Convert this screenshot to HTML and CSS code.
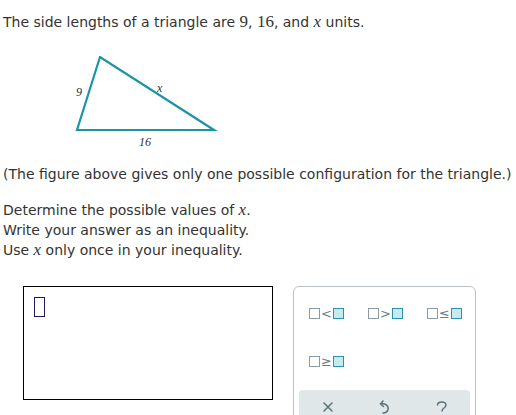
FILE: index.html
```html
<!DOCTYPE html>
<html lang="en">
    <head>
        <title>Triangle Inequality</title>
        <meta charset="UTF-8">
        <link rel="stylesheet" href="styles.css">
    </head>
    <body>
        <main>
            <p class="line">The side lengths of a triangle are <span class="num">9</span>, <span class="num">16</span>, and <i class="var">x</i> units.</p>

            <div class="figure">
                <svg width="160" height="92" viewBox="0 0 160 92">
                    <polygon points="33,1 10,74 147,74" fill="none" stroke="#1b95a6" stroke-width="2.2" stroke-linejoin="miter" />
                    <text x="9" y="40" class="lbl">9</text>
                    <text x="90" y="36" class="lbl">x</text>
                    <text x="72" y="90" class="lbl">16</text>
                </svg>
            </div>

            <p class="note">(The figure above gives only one possible configuration for the triangle.)</p>

            <div class="task">
                <div>Determine the possible values of <i class="var">x</i>.</div>
                <div>Write your answer as an inequality.</div>
                <div>Use <i class="var">x</i> only once in your inequality.</div>
            </div>

            <div class="work">
                <div class="answer">
                    <span class="cursor"></span>
                </div>

                <div class="palette">
                    <div class="keys">
                        <button><span class="box"></span><span class="op">&lt;</span><span class="box on"></span></button>
                        <button><span class="box"></span><span class="op">&gt;</span><span class="box on"></span></button>
                        <button><span class="box"></span><span class="op">&le;</span><span class="box on"></span></button>
                        <button><span class="box"></span><span class="op">&ge;</span><span class="box on"></span></button>
                    </div>
                    <div class="tools">
                        <svg class="tool" width="14" height="16" viewBox="0 0 14 16">
                            <path d="M3 3 L11 11 M11 3 L3 11" />
                        </svg>
                        <svg class="tool" width="14" height="16" viewBox="0 0 14 16">
                            <path d="M5 1 L2.5 4 L5.5 6.5 M2.5 4 C7 3 11 5.5 10 9.5 C9.3 12 6.5 13 5 13" />
                        </svg>
                        <svg class="tool" width="14" height="16" viewBox="0 0 14 16">
                            <path d="M2.5 5 C2.5 1.5 11 0.5 11 5 C11 8 7 8 7 11" />
                        </svg>
                    </div>
                </div>
            </div>
        </main>
    </body>
</html>
```

FILE: styles.css
```css
body {
    margin: 0;
    font-family: 'DejaVu Sans', Verdana, sans-serif;
    font-size: 14px;
    color: #333;
    background: #fff;
    overflow: hidden;
}

main {
    padding: 12px 0 0 3px;
}

p {
    margin: 0;
}

.num,
.var {
    font-family: 'Liberation Serif', serif;
    font-size: 17px;
}

.line {
    line-height: 20px;
}

.figure {
    margin: 24px 0 0 64px;
    height: 92px;
}

.figure svg {
    display: block;
}

.lbl {
    font-family: 'Liberation Serif', serif;
    font-style: italic;
    font-size: 12px;
    fill: #333;
}

.note {
    line-height: 20px;
    margin-top: 16px;
}

.task {
    margin-top: 16px;
    line-height: 20px;
}

.work {
    display: flex;
    gap: 20px;
    margin: 26px 0 0 20px;
}

.answer {
    border: 1px solid #000;
    padding: 10px 0 0 10px;
    box-sizing: border-box;
    width: 250px;
    height: 114px;
}

.cursor {
    display: block;
    width: 9px;
    height: 18px;
    border: 1px solid #1c1a5e;
}

.palette {
    width: 183px;
    height: 150px;
    border: 1px solid #b9c3c6;
    border-radius: 6px;
    box-sizing: border-box;
    padding: 0 5px;
}

.keys {
    display: grid;
    grid-template-columns: repeat(3, 59px);
    row-gap: 28px;
    padding: 16px 0 0 10px;
    height: 85px;
    box-sizing: border-box;
}

.keys button {
    display: flex;
    align-items: center;
    gap: 1px;
    border: none;
    background: none;
    padding: 0;
    height: 20px;
    font-family: 'DejaVu Sans', sans-serif;
    font-size: 13px;
    color: #687e86;
}

.box {
    display: inline-block;
    width: 9px;
    height: 9px;
    border: 1px solid #8b9ba1;
}

.box.on {
    border-color: #2a93a8;
    background: #c7e9f1;
}

.op {
    line-height: 1;
}

.tools {
    margin-top: 18px;
    height: 40px;
    background: #e0e7e9;
    border-radius: 4px;
    display: flex;
    justify-content: space-around;
    padding-top: 10px;
    box-sizing: border-box;
}

.tool {
    fill: none;
    stroke: #5c7078;
    stroke-width: 1.5;
    stroke-linecap: round;
}
```
